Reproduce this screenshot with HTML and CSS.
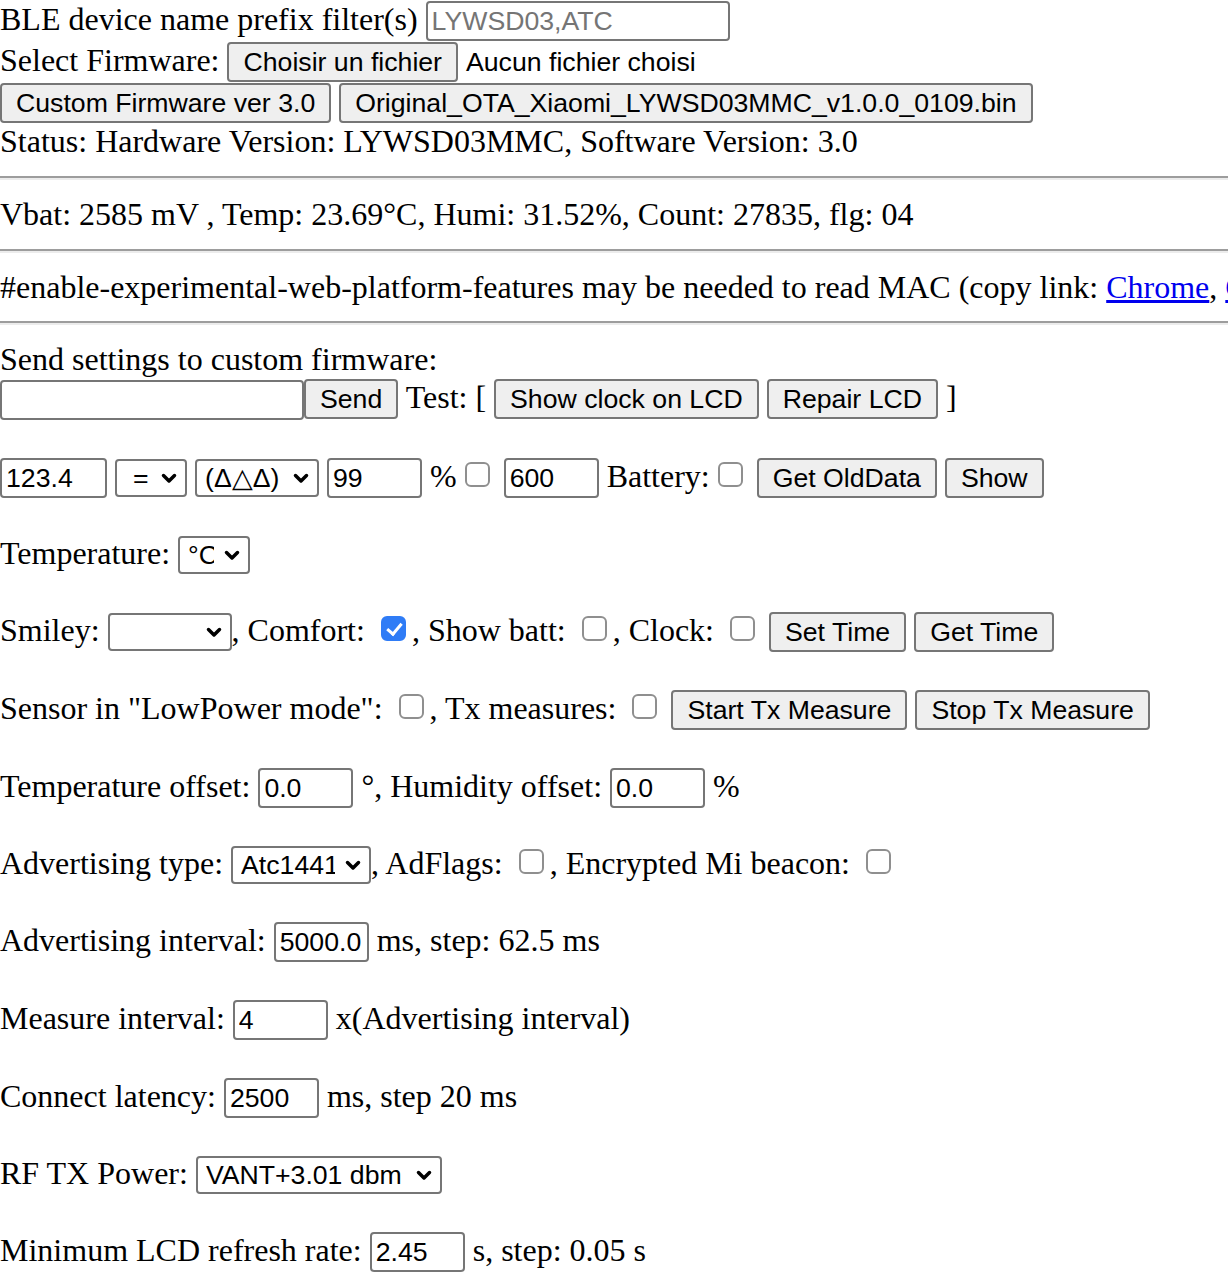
FILE: index.html
```html
<!DOCTYPE html>
<html lang="fr">
<head>
<meta charset="utf-8">
<title>TelinkFlasher</title>
<link rel="stylesheet" href="styles.css">
</head>
<body>
<div class="line">BLE device name prefix filter(s) <input class="field w-wide" type="text" placeholder="LYWSD03,ATC"></div>
<div class="line">Select Firmware: <button class="btn">Choisir un fichier</button><span class="file-status">Aucun fichier choisi</span></div>
<div class="line"><button class="btn">Custom Firmware ver 3.0</button> <button class="btn">Original_OTA_Xiaomi_LYWSD03MMC_v1.0.0_0109.bin</button></div>
<div class="line">Status: Hardware Version: LYWSD03MMC, Software Version: 3.0</div>
<hr class="rule">
<div class="line">Vbat: 2585 mV , Temp: 23.69°C, Humi: 31.52%, Count: 27835, flg: 04</div>
<hr class="rule">
<div class="line clip">#enable-experimental-web-platform-features may be needed to read MAC (copy link: <a class="link" href="#">Chrome</a>, <a class="link" href="#">Chromium</a>)</div>
<hr class="rule">
<div class="line">Send settings to custom firmware:</div>
<div class="line spaced"><input class="field w-wide" type="text"><button class="btn">Send</button> Test: [ <button class="btn">Show clock on LCD</button> <button class="btn">Repair LCD</button> ]</div>
<div class="line spaced"><input class="field w-num-l" type="text" value="123.4"> <span class="sel w-eq"><select class="select"><option>=</option></select><svg class="chev" viewBox="0 0 16 11"><path d="M2.5 2.5 L8 8 L13.5 2.5" /></svg></span> <span class="sel w-delta"><select class="select"><option>(Δ△Δ)</option></select><svg class="chev" viewBox="0 0 16 11"><path d="M2.5 2.5 L8 8 L13.5 2.5" /></svg></span> <input class="field w-num" type="text" value="99"> %<input class="check" type="checkbox"> <input class="field w-num" type="text" value="600"> Battery:<input class="check" type="checkbox"> <button class="btn">Get OldData</button> <button class="btn">Show</button></div>
<div class="line spaced">Temperature: <span class="sel w-deg"><select class="select"><option>°C</option></select><svg class="chev" viewBox="0 0 16 11"><path d="M2.5 2.5 L8 8 L13.5 2.5" /></svg></span></div>
<div class="line spaced">Smiley: <span class="sel w-smiley"><select class="select"><option></option></select><svg class="chev" viewBox="0 0 16 11"><path d="M2.5 2.5 L8 8 L13.5 2.5" /></svg></span>, Comfort: <input class="check" type="checkbox" checked>, Show batt: <input class="check" type="checkbox">, Clock: <input class="check" type="checkbox"> <button class="btn">Set Time</button> <button class="btn">Get Time</button></div>
<div class="line spaced">Sensor in "LowPower mode": <input class="check" type="checkbox">, Tx measures: <input class="check" type="checkbox"> <button class="btn">Start Tx Measure</button> <button class="btn">Stop Tx Measure</button></div>
<div class="line spaced">Temperature offset: <input class="field w-num" type="text" value="0.0"> °, Humidity offset: <input class="field w-num" type="text" value="0.0"> %</div>
<div class="line spaced">Advertising type: <span class="sel w-atc"><select class="select"><option>Atc1441</option></select><svg class="chev" viewBox="0 0 16 11"><path d="M2.5 2.5 L8 8 L13.5 2.5" /></svg></span>, AdFlags: <input class="check" type="checkbox">, Encrypted Mi beacon: <input class="check" type="checkbox"></div>
<div class="line spaced">Advertising interval: <input class="field w-num" type="text" value="5000.0"> ms, step: 62.5 ms</div>
<div class="line spaced">Measure interval: <input class="field w-num" type="text" value="4"> x(Advertising interval)</div>
<div class="line spaced">Connect latency: <input class="field w-num" type="text" value="2500"> ms, step 20 ms</div>
<div class="line spaced">RF TX Power: <span class="sel w-vant"><select class="select"><option>VANT+3.01 dbm</option></select><svg class="chev" viewBox="0 0 16 11"><path d="M2.5 2.5 L8 8 L13.5 2.5" /></svg></span></div>
<div class="line">Minimum LCD refresh rate: <input class="field w-num" type="text" value="2.45"> s, step: 0.05 s</div>
</body>
</html>
```

FILE: styles.css
```css
html, body {
  margin: 0;
  padding: 0;
}

body {
  font-family: "Liberation Serif", "Times New Roman", serif;
  font-size: 32px;
  line-height: 1.15;
  color: #000;
  background: #fff;
  overflow: hidden;
}

.line {
  white-space: nowrap;
}

.clip {
  overflow: hidden;
}

.spaced {
  margin-bottom: 37px;
}

.rule {
  margin: 16px 0;
  height: 0;
  border: 0;
  border-top: 2px solid #9d9d9d;
  border-bottom: 2px solid #ececec;
}

.link {
  color: #0000ee;
  text-decoration: underline;
}

.field,
.btn,
.select,
.file-status {
  font-family: "Liberation Sans", Arial, Helvetica, sans-serif;
  font-size: 26.67px;
  color: #000;
}

.field,
.btn,
.select {
  box-sizing: border-box;
  margin: 0;
  line-height: 32px;
  vertical-align: baseline;
  border: 2px solid #767676;
  border-radius: 4px;
}

.field,
.btn {
  margin-top: 1px;
}

.field {
  height: 40px;
  padding: 2px 4px;
  background: #fff;
}

.field::placeholder {
  color: #757575;
}

.btn {
  height: 40px;
  padding: 2px 14px;
  background: #efefef;
}

.file-status {
  margin-left: 8px;
}

.w-wide { width: 304px; }
.w-num-l { width: 107px; }
.w-num { width: 95px; }

.sel {
  position: relative;
  display: inline-block;
}

.select {
  -webkit-appearance: none;
  appearance: none;
  display: block;
  width: 100%;
  height: 38px;
  padding: 0 34px 0 8px;
  line-height: 34px;
  background: #fff;
}

.chev {
  position: absolute;
  right: 10px;
  top: 14px;
  width: 16px;
  height: 11px;
  pointer-events: none;
  fill: none;
  stroke: #000;
  stroke-width: 3.5;
  stroke-linecap: round;
  stroke-linejoin: round;
}

.w-eq { width: 72px; }
.w-delta { width: 124px; }
.w-deg { width: 72px; }
.w-smiley { width: 124px; }
.w-atc { width: 140px; }
.w-vant { width: 246px; }

.w-eq .select { padding-left: 16px; }

.check {
  -webkit-appearance: none;
  appearance: none;
  position: relative;
  box-sizing: border-box;
  width: 25px;
  height: 25px;
  margin: 0 6px 0 8px;
  vertical-align: baseline;
  border: 2px solid #8f8f8f;
  border-radius: 6px;
  background: #fff;
}

.check:checked {
  background: #2f7cf6;
  border-color: #2f7cf6;
}

.check:checked::after {
  content: "";
  position: absolute;
  left: 7px;
  top: 2px;
  width: 6px;
  height: 12px;
  border-right: 3px solid #fff;
  border-bottom: 3px solid #fff;
  transform: rotate(40deg);
}
```
